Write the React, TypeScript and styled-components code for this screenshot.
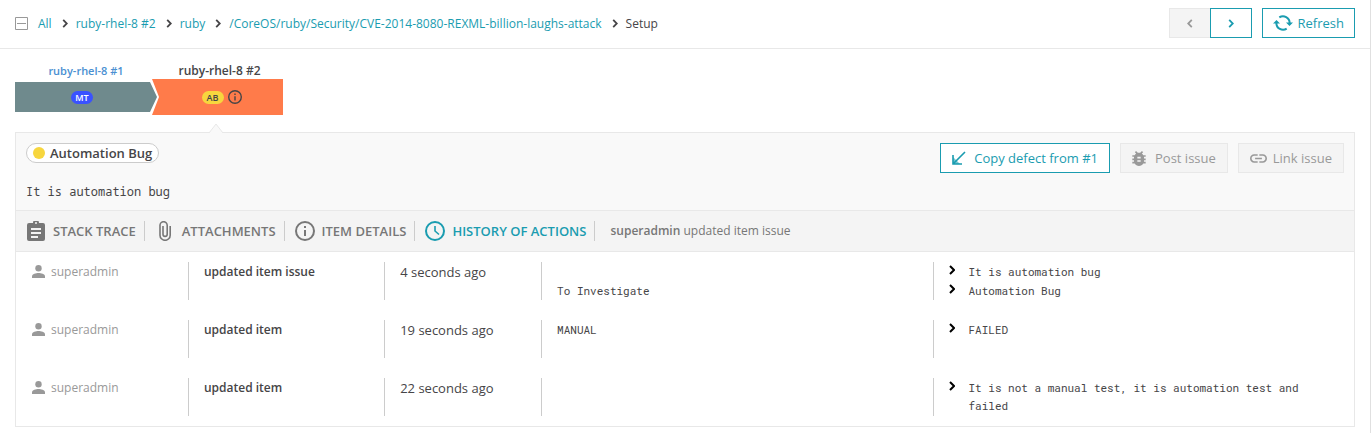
import React from "react";
import styled, { createGlobalStyle, css } from "styled-components";

const teal = "#1a9cb0";
const ink = "#464547";
const line = "#e8e8e8";
const sans = `"Open Sans", "Noto Sans", sans-serif`;
const droidMono = `"Droid Sans Mono", "Noto Sans Mono", "DejaVu Sans Mono", monospace`;
const robotoMono = `"Roboto Mono", "DejaVu Sans Mono", monospace`;

const GlobalStyle = createGlobalStyle`
  *, *::before, *::after { box-sizing: border-box; }
  body { margin: 0; background: #fff; color: ${ink}; font-family: ${sans}; font-size: 12px; line-height: 18px; }
  svg { display: block; flex: none; }
`;

const Page = styled.main`
  min-height: 100vh;
  border-right: 1px solid #e0e0e0;
`;

const Toolbar = styled.header`
  display: flex;
  align-items: center;
  justify-content: space-between;
  padding: 8px 15px 10px;
  border-bottom: 1px solid ${line};
`;

const Breadcrumbs = styled.nav`
  display: flex;
  align-items: center;
  gap: 10px;
  padding-top: 1px;
  line-height: 19px;
`;

const Separator = styled.span`
  width: 4px;
`;

const CollapseButton = styled.button`
  padding: 0;
  border: 0;
  background: none;
`;

const Crumb = styled.a`
  color: ${teal};
  text-decoration: none;
`;

const ToolbarActions = styled.div`
  display: flex;
  gap: 10px;
`;

const Pager = styled.div`
  display: flex;
`;

const Button = styled.button<{ $pad?: number }>`
  display: flex;
  align-items: center;
  justify-content: center;
  height: 30px;
  padding: 0 ${(p) => p.$pad ?? 10}px;
  border: 1px solid ${teal};
  background: #fff;
  color: ${teal};
  font: 13px/18px ${sans};
  white-space: nowrap;
  &:disabled {
    border-color: ${line};
    background: #f4f4f4;
    color: #999;
  }
`;

const PagerButton = styled(Button)`
  width: 42px;
  padding: 0;
  &:disabled {
    width: 41px;
    border-right: 0;
  }
`;

const ButtonIcon = styled.span<{ $gap: number }>`
  margin-right: ${(p) => p.$gap}px;
`;

const Launches = styled.section`
  display: flex;
  padding: 13px 15px 0;
`;

const Launch = styled.div<{ $active?: boolean }>`
  position: relative;
  width: ${(p) => (p.$active ? 131 : 142)}px;
  margin-left: ${(p) => (p.$active ? -5 : 0)}px;
  padding-bottom: 17px;
`;

const LaunchName = styled.a<{ $active?: boolean }>`
  display: block;
  padding-left: ${(p) => (p.$active ? 4 : 0)}px;
  color: ${(p) => (p.$active ? ink : "#4a90d2")};
  font-size: ${(p) => (p.$active ? 12 : 11)}px;
  font-weight: 600;
  line-height: 17px;
  text-align: center;
  text-decoration: none;
`;

const LaunchBar = styled.div<{ $active?: boolean }>`
  display: flex;
  align-items: center;
  justify-content: center;
  gap: 4px;
  ${(p) =>
    p.$active
      ? css`
          height: 36px;
          padding-left: 8px;
          background: #ff7b4a;
          clip-path: polygon(0 0, 100% 0, 100% 100%, 0 100%, 7px 50%);
        `
      : css`
          height: 30px;
          margin: 3px 0;
          padding-right: 8px;
          background: #6f8a8d;
          clip-path: polygon(0 0, calc(100% - 7px) 0, 100% 50%, calc(100% - 7px) 100%, 0 100%);
        `}
`;

const Badge = styled.span<{ $color: string; $text: string }>`
  width: 22px;
  border-radius: 7px;
  background: ${(p) => p.$color};
  color: ${(p) => p.$text};
  font-size: 9px;
  font-weight: 600;
  line-height: 13px;
  text-align: center;
`;

const Pointer = styled.svg`
  position: absolute;
  bottom: -1px;
  left: calc(50% - 10px);
`;

const Panel = styled.section`
  margin: 0 15px;
  border: 1px solid ${line};
`;

const Defect = styled.div`
  padding: 10px;
  background: #f9f9f9;
`;

const DefectTop = styled.div`
  display: flex;
  align-items: flex-start;
  justify-content: space-between;
  margin-bottom: 10px;
`;

const DefectType = styled.span`
  display: flex;
  align-items: center;
  gap: 5px;
  padding: 0 6px;
  border: 1px solid #ccc;
  border-radius: 10px;
  background: #fff;
  font-size: 13px;
  font-weight: 600;
  &::before {
    content: "";
    width: 12px;
    height: 12px;
    border-radius: 50%;
    background: #f7d63e;
  }
`;

const DefectActions = styled.div`
  display: flex;
  gap: 10px;
`;

const Comment = styled.p`
  margin: 0;
  font: 12px/17px ${droidMono};
`;

const Tabs = styled.div`
  display: flex;
  align-items: center;
  padding: 10px 0;
  border: solid ${line};
  border-width: 1px 0;
  background: #f4f4f4;
`;

const Tab = styled.button<{ $active?: boolean }>`
  display: flex;
  align-items: center;
  gap: 7px;
  height: 20px;
  padding: 0 8px 0 10px;
  border: 0;
  border-right: 1px solid #ccc;
  background: none;
  color: ${(p) => (p.$active ? teal : "#777")};
  font: 600 13px/20px ${sans};
  white-space: nowrap;
`;

const LastAction = styled.span`
  padding-left: 15px;
  color: #777;
  line-height: 20px;
  b { font-weight: 600; }
`;

const TableWrap = styled.div`
  padding: 0 15px;
`;

const History = styled.table`
  width: 100%;
  table-layout: fixed;
  border-collapse: collapse;
`;

const Col = styled.col<{ $share: number }>`
  width: ${(p) => p.$share}%;
`;

const Cell = styled.td`
  height: 58px;
  padding: 10px 0;
  vertical-align: top;
`;

const CellBody = styled.div<{ $first?: boolean }>`
  min-height: 38px;
  line-height: 20px;
  ${(p) => !p.$first && css`
    padding-left: 15px;
    border-left: 1px solid #ccc;
  `}
`;

const User = styled.span`
  display: flex;
  gap: 5px;
  color: #999;
  svg { margin-top: 3px; }
`;

const Action = styled.span`
  font-weight: 600;
`;

const Time = styled.time`
  display: block;
  font-size: 13px;
`;

const Value = styled.div`
  display: flex;
  gap: 13px;
  min-height: 19px;
  padding-top: 1px;
  font: 11px/18px ${robotoMono};
  svg { margin-top: 2px; }
`;

const Chevron = ({ left = false, size = 10, width = 2, color = "currentColor" }) => (
  <svg width={Math.round(size / 2) + 1} height={size} viewBox="0 0 6 10" fill="none" stroke={color} strokeWidth={width}>
    <path d={left ? "M5 1 1 5l4 4" : "M1 1l4 4-4 4"} />
  </svg>
);

const RefreshIcon = () => (
  <svg width="20" height="16" viewBox="0 0 20 16" fill="none" stroke="currentColor" strokeWidth="2">
    <path d="M6.3 2.4A6.6 6.6 0 0 1 16.6 8" />
    <path d="M13.7 13.6A6.6 6.6 0 0 1 3.4 8" />
    <path d="M13 7.5h7L16.5 11zM0 8.5h7L3.5 5z" fill="currentColor" stroke="none" />
  </svg>
);

const CopyIcon = () => (
  <svg width="14" height="14" viewBox="0 0 14 14">
    <path d="M1 4v9h9M1.5 12.5 13 1" fill="none" stroke="currentColor" strokeWidth="1.6" />
    <path d="M1 6v7h7z" fill="currentColor" opacity=".6" />
  </svg>
);

const BugIcon = () => (
  <svg width="14" height="15" viewBox="4 3 16 18" fill="currentColor">
    <path d="M20 8h-2.81c-.45-.78-1.07-1.45-1.82-1.96L17 4.41 15.59 3l-2.17 2.17C12.96 5.06 12.49 5 12 5s-.96.06-1.41.17L8.41 3 7 4.41l1.62 1.63C7.88 6.55 7.26 7.22 6.81 8H4v2h2.09c-.05.33-.09.66-.09 1v1H4v2h2v1c0 .34.04.67.09 1H4v2h2.81c1.04 1.79 2.97 3 5.19 3s4.15-1.21 5.19-3H20v-2h-2.09c.05-.33.09-.66.09-1v-1h2v-2h-2v-1c0-.34-.04-.67-.09-1H20V8zm-6 8h-4v-2h4v2zm0-4h-4v-2h4v2z" />
  </svg>
);

const LinkIcon = () => (
  <svg width="17" height="9" viewBox="2 7 20 10" fill="currentColor">
    <path d="M3.9 12c0-1.71 1.39-3.1 3.1-3.1h4V7H7c-2.76 0-5 2.24-5 5s2.24 5 5 5h4v-1.9H7c-1.71 0-3.1-1.39-3.1-3.1zM8 13h8v-2H8v2zm9-6h-4v1.9h4c1.71 0 3.1 1.39 3.1 3.1s-1.39 3.1-3.1 3.1h-4V17h4c2.76 0 5-2.24 5-5s-2.24-5-5-5z" />
  </svg>
);

const InfoIcon = ({ size = 20 }) => (
  <svg width={size} height={size} viewBox="0 0 20 20" fill="none" stroke="currentColor" strokeWidth="2">
    <circle cx="10" cy="10" r="9" />
    <path d="M10 9v6M10 5v2" />
  </svg>
);

const StackIcon = () => (
  <svg width="20" height="20" viewBox="0 0 20 20" fill="currentColor">
    <path
      fillRule="evenodd"
      d="M3 2h4a3 3 0 0 1 6 0h4a2 2 0 0 1 2 2v14a2 2 0 0 1-2 2H3a2 2 0 0 1-2-2V4a2 2 0 0 1 2-2zm7-1a1 1 0 1 0 0 2 1 1 0 0 0 0-2zM5 7v2h10V7zm0 4v2h10v-2zm0 4v2h7v-2z"
    />
  </svg>
);

const ClipIcon = () => (
  <svg width="20" height="20" viewBox="0 0 20 20" fill="none" stroke="currentColor" strokeWidth="1.6">
    <path d="M15.200 5v9.200a5 5 0 0 1-10.200 0V4.300a3.600 3.600 0 0 1 7.200 0v9a2.100 2.100 0 0 1-4.200 0V5" />
  </svg>
);

const ClockIcon = () => (
  <svg width="20" height="20" viewBox="0 0 20 20" fill="none" stroke="currentColor" strokeWidth="2">
    <circle cx="10" cy="10" r="9" />
    <path d="M10 5v5l4 3.500" strokeWidth="1.6" />
  </svg>
);

const UserIcon = () => (
  <svg width="15" height="13" viewBox="0 0 15 13" fill="currentColor">
    <circle cx="7.5" cy="3.2" r="3.2" />
    <path d="M1 13v-1.800C1 9 5 8 7.500 8S14 9 14 11.200V13z" />
  </svg>
);

const crumbs = ["All", "ruby-rhel-8 #2", "ruby", "/CoreOS/ruby/Security/CVE-2014-8080-REXML-billion-laughs-attack"];

const tabs = [
  { label: "STACK TRACE", icon: <StackIcon /> },
  { label: "ATTACHMENTS", icon: <ClipIcon /> },
  { label: "ITEM DETAILS", icon: <InfoIcon /> },
  { label: "HISTORY OF ACTIONS", icon: <ClockIcon />, active: true },
];

const history = [
  { action: "updated item issue", time: "4 seconds ago", before: ["", "To Investigate"], after: ["It is automation bug", "Automation Bug"] },
  { action: "updated item", time: "19 seconds ago", before: ["MANUAL"], after: ["FAILED"] },
  { action: "updated item", time: "22 seconds ago", before: [""], after: ["It is not a manual test, it is automation test and failed"] },
];

export default function App() {
  return (
    <Page>
      <GlobalStyle />
      <Toolbar>
        <Breadcrumbs aria-label="Breadcrumb">
          <CollapseButton aria-label="Collapse path">
            <svg width="13" height="13" viewBox="0 0 13 13" fill="none" stroke="#999">
              <path d="M.5.5h12v12H.5zM2 6.500h9" />
            </svg>
          </CollapseButton>
          {crumbs.map((c) => (
            <React.Fragment key={c}>
              <Crumb href="#">{c}</Crumb>
              <Separator><Chevron size={9} color={ink} /></Separator>
            </React.Fragment>
          ))}
          <span>Setup</span>
        </Breadcrumbs>
        <ToolbarActions>
          <Pager>
            <PagerButton disabled aria-label="Previous"><Chevron left size={9} /></PagerButton>
            <PagerButton aria-label="Next"><Chevron size={9} /></PagerButton>
          </Pager>
          <Button>
            <ButtonIcon $gap={5}><RefreshIcon /></ButtonIcon>
            Refresh
          </Button>
        </ToolbarActions>
      </Toolbar>

      <Launches>
        <Launch>
          <LaunchName href="#">ruby-rhel-8 #1</LaunchName>
          <LaunchBar>
            <Badge $color="#3a52ff" $text="#fff">MT</Badge>
          </LaunchBar>
        </Launch>
        <Launch $active>
          <LaunchName href="#" $active>ruby-rhel-8 #2</LaunchName>
          <LaunchBar $active>
            <Badge $color="#f7d63e" $text={ink}>AB</Badge>
            <InfoIcon size={14} />
          </LaunchBar>
          <Pointer width="16" height="10" viewBox="0 0 16 10">
            <path d="M1 10 8 1l7 9" fill="#f9f9f9" stroke={line} />
          </Pointer>
        </Launch>
      </Launches>

      <Panel>
        <Defect>
          <DefectTop>
            <DefectType>Automation Bug</DefectType>
            <DefectActions>
              <Button $pad={11}>
                <ButtonIcon $gap={8}><CopyIcon /></ButtonIcon>
                Copy defect from #1
              </Button>
              <Button disabled $pad={11}>
                <ButtonIcon $gap={9}><BugIcon /></ButtonIcon>
                Post issue
              </Button>
              <Button disabled $pad={11}>
                <ButtonIcon $gap={6}><LinkIcon /></ButtonIcon>
                Link issue
              </Button>
            </DefectActions>
          </DefectTop>
          <Comment>It is automation bug</Comment>
        </Defect>
        <Tabs>
          {tabs.map((t) => (
            <Tab key={t.label} $active={t.active}>
              {t.icon}
              {t.label}
            </Tab>
          ))}
          <LastAction><b>superadmin</b> updated item issue</LastAction>
        </Tabs>
        <TableWrap>
          <History>
            <colgroup>
              {[12, 15, 12, 30, 31].map((share, i) => <Col key={i} $share={share} />)}
            </colgroup>
            <tbody>
              {history.map((h) => (
                <tr key={h.time}>
                  <Cell><CellBody $first><User><UserIcon />superadmin</User></CellBody></Cell>
                  <Cell><CellBody><Action>{h.action}</Action></CellBody></Cell>
                  <Cell><CellBody><Time>{h.time}</Time></CellBody></Cell>
                  <Cell><CellBody>{h.before.map((v, i) => <Value key={i}>{v}</Value>)}</CellBody></Cell>
                  <Cell>
                    <CellBody>
                      {h.after.map((v) => <Value key={v}><Chevron color="#000" />{v}</Value>)}
                    </CellBody>
                  </Cell>
                </tr>
              ))}
            </tbody>
          </History>
        </TableWrap>
      </Panel>
    </Page>
  );
}
